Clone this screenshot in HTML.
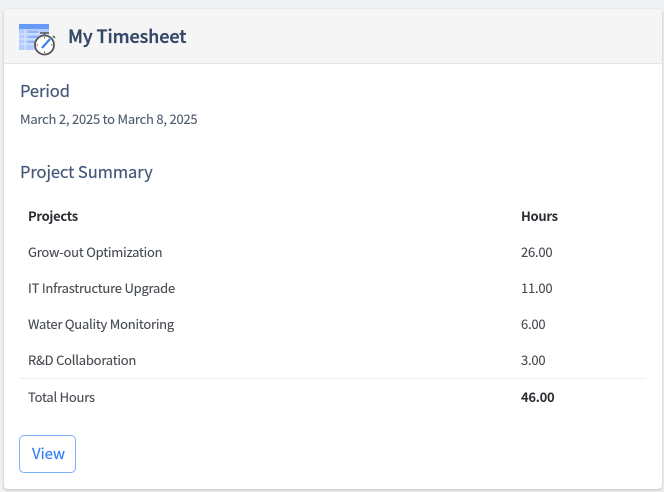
<!DOCTYPE html>
<html><head><meta charset="utf-8">
<style>
html,body{margin:0;padding:0;width:664px;height:492px;overflow:hidden;background:#eff1f3;}
body{font-family:"Noto Sans CJK JP","Liberation Sans",sans-serif;position:relative;}
.card{position:absolute;left:4px;top:9px;width:658px;height:480px;background:#fff;border-radius:4px;box-shadow:0 1px 3px rgba(0,0,0,.22);overflow:hidden;}
.head{position:absolute;left:0;top:0;width:100%;height:54px;background:#f5f5f6;border-bottom:1px solid #e6e6e8;}
.t{position:absolute;white-space:nowrap;line-height:20px;}
.s{font-size:13px;letter-spacing:-.22px;color:#444a50;-webkit-text-stroke:.1px currentColor;}
.b{font-weight:700;color:#2a2e33;-webkit-text-stroke:0;letter-spacing:-.3px;}
.h{font-size:16.500px;letter-spacing:-.07px;color:#46587a;-webkit-text-stroke:.2px currentColor;}
svg{position:absolute;}
</style></head><body>
<div class="card"><div class="head"></div></div>
<svg style="left:18px;top:22px" width="40" height="34" viewBox="0 0 40 34">
<rect x="1" y="2" width="30" height="26" fill="#b5cdfd"/>
<rect x="1" y="2" width="30" height="5" fill="#6a9af7"/>
<path d="M7 7v21M1 12h30M1 17h30M1 22h30" stroke="#dfe9ff" stroke-width="1"/>
<path d="M10 10h10M10 15h13M10 20h8" stroke="#6a9af7" stroke-width="1"/>
<path d="M22 11h9M26.500 11v3M35 14l2 2" stroke="#555" stroke-width="1.500" fill="none"/>
<circle cx="26.500" cy="23" r="9.500" fill="#fff" stroke="#555" stroke-width="1.800"/>
<path d="M24 26l8-9" stroke="#3f7df0" stroke-width="2.200"/>
<path d="M26.500 15v1.500M26.500 29.500v1.500M18.500 23h1.500M33 23h1.500" stroke="#555" stroke-width="1"/>
</svg>
<div class="t" style="left:68px;top:26px;font-size:18px;font-weight:500;letter-spacing:-.08px;color:#334767;-webkit-text-stroke:.35px currentColor">My Timesheet</div>
<div class="t h" style="left:20px;top:80px">Period</div>
<div class="t s" style="left:20px;top:109px;color:#4d5a6c">March 2, 2025 to March 8, 2025</div>
<div class="t h" style="left:20px;top:161px">Project Summary</div>
<div class="t s b" style="left:28px;top:206px">Projects</div>
<div class="t s b" style="left:521px;top:206px">Hours</div>
<div class="t s" style="left:28px;top:242px">Grow-out Optimization</div>
<div class="t s" style="left:521px;top:242px">26.00</div>
<div class="t s" style="left:28px;top:278px">IT Infrastructure Upgrade</div>
<div class="t s" style="left:521px;top:278px">11.00</div>
<div class="t s" style="left:28px;top:314px">Water Quality Monitoring</div>
<div class="t s" style="left:521px;top:314px">6.00</div>
<div class="t s" style="left:28px;top:350px">R&amp;D Collaboration</div>
<div class="t s" style="left:521px;top:350px">3.00</div>
<div style="position:absolute;left:20px;top:378px;width:626px;height:1px;background:#eceef0"></div>
<div class="t s" style="left:28px;top:387px">Total Hours</div>
<div class="t s b" style="left:521px;top:387px">46.00</div>
<div style="position:absolute;left:19px;top:435px;width:55px;height:36px;border:1px solid #7fb0fb;border-radius:5px;background:#fff;"></div>
<div class="t" style="left:32px;top:444px;font-size:15px;letter-spacing:-.05px;color:#2f7df6;-webkit-text-stroke:.15px currentColor">View</div>
</body></html>
